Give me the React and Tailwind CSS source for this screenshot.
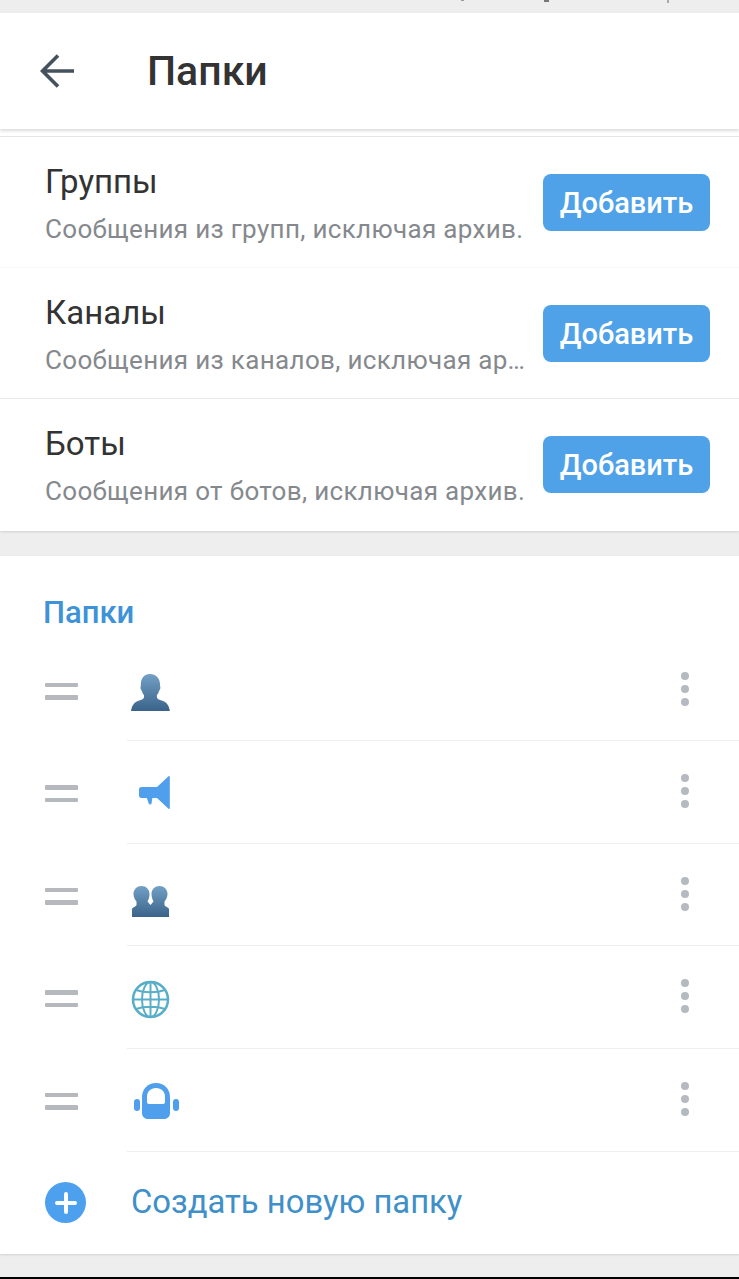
const suggestions = [
  { title: 'Группы', text: 'Сообщения из групп, исключая архив.', border: 'border-[#f7f7f7]' },
  { title: 'Каналы', text: 'Сообщения из каналов, исключая архив.', border: 'border-[#e9e9e9]' },
  { title: 'Боты', text: 'Сообщения от ботов, исключая архив.', border: 'border-transparent' },
];

const PersonIcon = () => (
  <svg width="40" height="42" viewBox="0 0 40 42">
    <defs>
      <linearGradient id="person" x1="0" y1="0" x2="0" y2="1">
        <stop offset="0" stopColor="#72a0c6" />
        <stop offset="1" stopColor="#3b6389" />
      </linearGradient>
    </defs>
    <path
      d="M19 3c6 0 10 4.500 10 10.500 0 1.500.5 2.500.3 4-.2 1-.8 1.500-1.200 2.500-.5 1.500-1.200 3-2.200 4v2c0 2 3 3 6 4 3.500 1 6 4 7 10H0c1-6 3.500-9 7-10 3-1 6-2 6-4v-2c-1-1-1.700-2.500-2.200-4-.4-1-1-1.500-1.200-2.500-.2-1.500.3-2.500.3-4C9.900 7.500 13 3 19 3z"
      fill="url(#person)"
    />
  </svg>
);

const MegaphoneIcon = () => (
  <svg width="40" height="42" viewBox="0 0 40 42">
    <path
      d="M37.500 3.300c.6-.5 1.300-.2 1.300.6v31.200c0 .8-.7 1.200-1.300.6L26 25H10.500C9 25 8 24 8 22.500v-6C8 15 9 14 10.500 14H26z"
      fill="#4f9fec"
    />
    <path d="M15.500 24h6l-1 6.500c-.3 1.300-2.300 1.300-2.800 0z" fill="#4f9fec" />
  </svg>
);

const GroupIcon = () => (
  <svg width="40" height="42" viewBox="0 0 40 42">
    <defs>
      <linearGradient id="group" x1="0" y1="0" x2="0" y2="1">
        <stop offset="0" stopColor="#72a0c6" />
        <stop offset="1" stopColor="#3b6389" />
      </linearGradient>
    </defs>
    <path
      d="M10.500 10C15 10 18.500 13.500 18.500 18C18.500 21 17.500 24 16.500 25.500L19.500 29L22.500 25.500C21.500 24 20.500 21 20.500 18C20.500 13.500 24 10 28.500 10C33 10 36.500 13.500 36.500 18C36.500 21 35 24 33.500 25.500V29C33.500 30.500 38 31.500 38 33V41H1V33C1 31.500 5.500 30.500 5.500 29V25.500C4 24 2.500 21 2.500 18C2.500 13.500 6 10 10.500 10Z"
      fill="url(#group)"
    />
  </svg>
);

const GlobeIcon = () => (
  <svg width="40" height="42" viewBox="0 0 40 42" fill="none" stroke="#58aec9" strokeWidth="2">
    <circle cx="19.500" cy="21.500" r="17.500" strokeWidth="2.500" />
    <ellipse cx="19.500" cy="21.500" rx="8.500" ry="17.500" />
    <path d="M19.500 4v35M2 21.500h35M5 12c8 3 21 3 29 0M5 31c8-3 21-3 29 0" />
  </svg>
);

const BotIcon = () => (
  <svg width="48" height="42" viewBox="0 0 48 42">
    <rect x="3" y="18" width="6" height="12" rx="3" fill="#4f9fec" />
    <rect x="42" y="18" width="6" height="12" rx="3" fill="#4f9fec" />
    <path d="M25 2c8 0 14 6 14 14v16c0 3.500-2.500 6-6 6H17c-3.500 0-6-2.500-6-6V16C11 8 17 2 25 2z" fill="#4f9fec" />
    <path d="M25 7c5.400 0 9 3.800 9 8.500v5.500c0 1.300-.8 2-2 2H18c-1.200 0-2-.7-2-2v-5.500C16 10.800 19.600 7 25 7z" fill="#fff" />
  </svg>
);

const folders = [PersonIcon, MegaphoneIcon, GroupIcon, GlobeIcon, BotIcon];

const SuggestionRow = ({ title, text, border }) => (
  <div className={`flex h-[131.200px] items-center border-b pl-[45px] pr-[29px] ${border}`}>
    <div className="w-[482px] min-w-0 pt-[3px]">
      <div className="text-[33px] leading-[44px] text-[#333333]">{title}</div>
      <div className="mt-[6px] truncate text-[26px] leading-[38px] tracking-[0.33px] text-[#85898d]">{text}</div>
    </div>
    <button className="ml-[16px] mt-[1px] flex h-[57px] w-[167px] shrink-0 items-center justify-center rounded-[8px] bg-[#50a2e8] pt-[2px] text-[29px] font-medium text-white">
      Добавить
    </button>
  </div>
);

const FolderRow = ({ Icon }) => (
  <div className="flex h-[102.600px] pl-[45px]">
    <div className="flex w-[82px] shrink-0 flex-col gap-[8px] pt-[44px]">
      <div className="h-[4.500px] w-[33px] rounded-[1px] bg-[#b5b9bd]" />
      <div className="h-[4.500px] w-[33px] rounded-[1px] bg-[#b5b9bd]" />
    </div>
    <div className="flex min-w-0 flex-1 justify-between border-b border-[#eceeef] pl-[4px] pr-[50px] pt-[32px]">
      <Icon />
      <div className="flex flex-col gap-[5px] pt-[1px]">
        <div className="h-[8px] w-[8px] rounded-full bg-[#b5bac1]" />
        <div className="h-[8px] w-[8px] rounded-full bg-[#b5bac1]" />
        <div className="h-[8px] w-[8px] rounded-full bg-[#b5bac1]" />
      </div>
    </div>
  </div>
);

export default function App() {
  return (
    <div className="flex h-[1279px] flex-col bg-[#eeeeee] font-['Roboto',sans-serif]">
      <div className="flex h-[13px] shrink-0 items-start">
        <div className="ml-[461px] h-[1px] w-[3px] bg-[#999999]" />
        <div className="ml-[80px] h-[2px] w-[5px] bg-[#777777]" />
        <div className="ml-[118px] h-[3px] w-[2px] bg-[#aaaaaa]" />
      </div>
      <header className="z-10 flex h-[116px] shrink-0 items-center bg-white pl-[40px] shadow-[0_2px_3px_rgba(0,0,0,0.14)]">
        <svg width="34" height="34" viewBox="0 0 34 34" fill="none" stroke="#44525e" strokeWidth="3.600">
          <path d="M2.500 17H34M18 1.500L2.500 17L18 32.500" />
        </svg>
        <h1 className="ml-[73px] text-[41px] font-medium leading-none text-[#333333]">Папки</h1>
      </header>

      <section className="bg-white pt-[7px] shadow-[0_1px_2px_rgba(0,0,0,0.12)]">
        <div className="border-t border-[#e4e4e4]">
          {suggestions.map((s) => (
            <SuggestionRow key={s.title} {...s} />
          ))}
        </div>
      </section>

      <section className="mt-[25px] bg-white shadow-[0_1px_2px_rgba(0,0,0,0.12)]">
        <h2 className="pl-[43px] pt-[40px] pb-[26px] text-[31px] font-medium leading-[34px] text-[#3d92d8]">Папки</h2>
        <div className="-mt-[17px]">
          {folders.map((Icon, i) => (
            <FolderRow key={i} Icon={Icon} />
          ))}
        </div>
        <div className="flex h-[102px] items-center pl-[45px]">
          <div className="flex h-[41px] w-[41px] items-center justify-center rounded-full bg-[#4da0ee]">
            <svg width="24" height="24" viewBox="0 0 24 24" stroke="#fff" strokeWidth="4" strokeLinecap="round">
              <path d="M12 3v18M3 12h18" />
            </svg>
          </div>
          <span className="ml-[45px] text-[32.800px] text-[#3f8fc9]">Создать новую папку</span>
        </div>
      </section>

      <div className="flex-1" />
      <div className="h-[2px] shrink-0 bg-black" />
    </div>
  );
}
